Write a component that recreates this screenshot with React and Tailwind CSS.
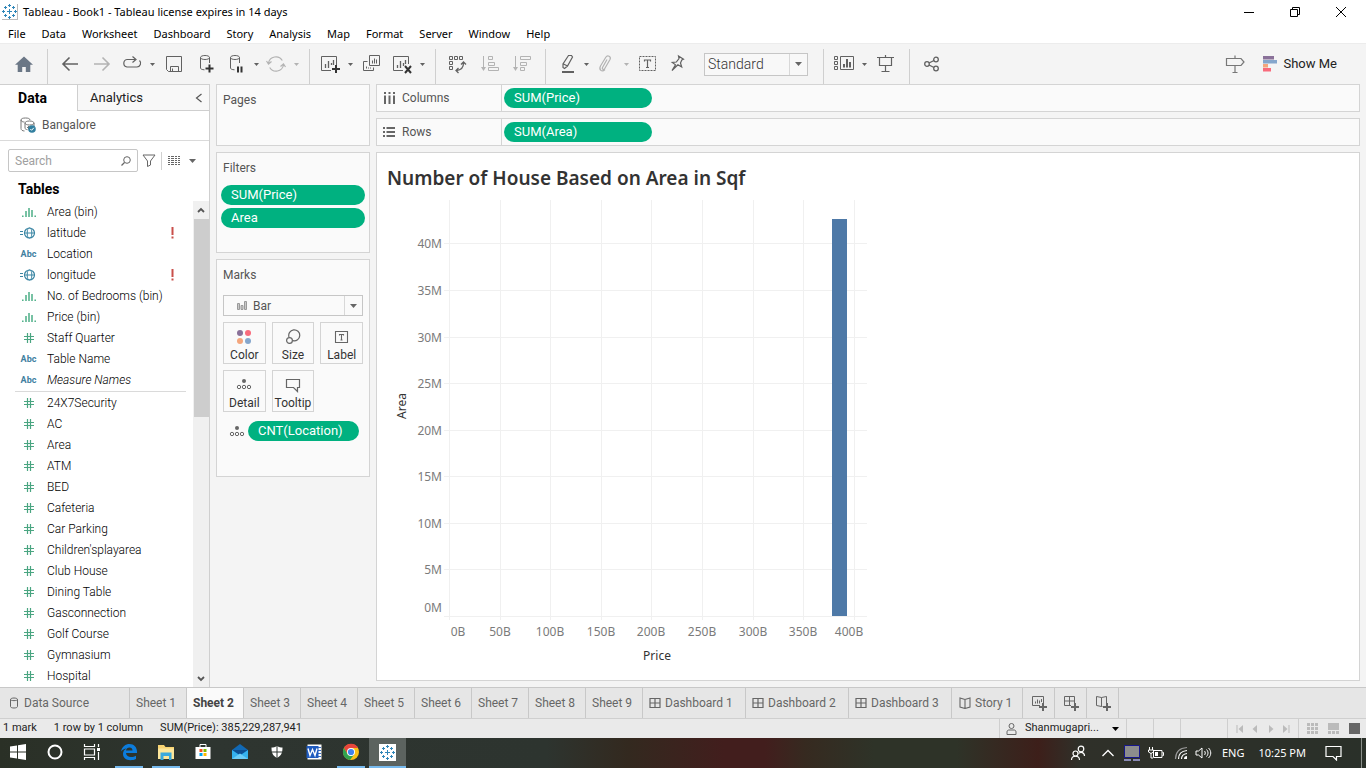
import React from "react";

const UI = "font-[Roboto,'Liberation_Sans',sans-serif]";
const SYS = "font-['Noto_Sans','Open_Sans',sans-serif]";

/* ---------- shared drawing helpers ---------- */

function Svg({ w = 20, h = 20, children, className = "" }) {
  return (
    <svg width={w} height={h} viewBox={`0 0 ${w} ${h}`} fill="none" className={`shrink-0 ${className}`} aria-hidden="true">
      {children}
    </svg>
  );
}

function TableauMark({ size = 16, color = "#2f86b8" }) {
  const plus = (x, y, r, w) => <path key={`${x}-${y}`} d={`M${x - r} ${y}h${2 * r}M${x} ${y - r}v${2 * r}`} strokeWidth={w} />;
  return (
    <svg width={size} height={size} viewBox="0 0 15 15" fill="none" stroke={color} className="shrink-0" aria-hidden="true">
      {plus(7.5, 7.5, 2.5, 1)}
      {plus(7.5, 1.5, 1.5, 1)}
      {plus(7.5, 13.5, 1.5, 1)}
      {plus(1.5, 7.5, 1.5, 1)}
      {plus(13.5, 7.5, 1.5, 1)}
      {plus(3.5, 3.5, 1.5, 1)}
      {plus(11.5, 3.5, 1.5, 1)}
      {plus(3.5, 11.5, 1.5, 1)}
      {plus(11.5, 11.5, 1.5, 1)}
    </svg>
  );
}

function Caret({ color = "#666", w = 7, h = 4 }) {
  return (
    <svg width={w} height={h} viewBox="0 0 8 4" preserveAspectRatio="none" className="shrink-0" aria-hidden="true">
      <path d="M0 0h8L4 4z" fill={color} />
    </svg>
  );
}

/* ---------- title and menu bars ---------- */

function TitleBar() {
  return (
    <header className="flex h-6 shrink-0 items-center bg-white pr-[2px] pl-[2px]">
      <span className="flex size-4 items-center justify-center border-r border-b border-[#bbb]">
        <TableauMark size={15} />
      </span>
      <h1 className="ml-[5px] flex-1 text-[11px] leading-4 whitespace-nowrap">Tableau - Book1 - Tableau license expires in 14 days</h1>
      <button aria-label="Minimize" className="flex h-5 w-[46px] items-center justify-center">
        <Svg w={12} h={12}><path d="M1 6.500h10" stroke="#000" /></Svg>
      </button>
      <button aria-label="Restore" className="flex h-5 w-[46px] items-center justify-center">
        <Svg w={12} h={12}><path d="M1.500 3.500h7v7h-7zM3.500 3.500v-2h7v7h-2" stroke="#000" /></Svg>
      </button>
      <button aria-label="Close" className="flex h-5 w-[46px] items-center justify-center">
        <Svg w={12} h={12}><path d="M1 1l10 10M11 1L1 11" stroke="#000" /></Svg>
      </button>
    </header>
  );
}

const MENUS = ["File", "Data", "Worksheet", "Dashboard", "Story", "Analysis", "Map", "Format", "Server", "Window", "Help"];

function MenuBar() {
  return (
    <nav className="flex h-[19px] shrink-0 items-center gap-4 bg-white pl-2">
      {MENUS.map((m) => (
        <button key={m} className="text-[11px] leading-4">{m}</button>
      ))}
    </nav>
  );
}

/* ---------- toolbar ---------- */

const G = "#616161";
const L = "#b3b3b3";

function Tool({ label, narrow, children }) {
  return (
    <button aria-label={label} className={`flex h-8 shrink-0 items-center justify-center ${narrow ? "w-7" : "w-8"}`}>
      <Svg>{children}</Svg>
    </button>
  );
}

function Drop({ label, color }) {
  return (
    <button aria-label={label} className="flex h-8 w-3 shrink-0 items-center justify-center">
      <Caret color={color} w={5} h={3} />
    </button>
  );
}

function Sep() {
  return <span className="mr-[6px] ml-[7px] h-[35px] w-px shrink-0 self-end bg-[#cfcfcf]" />;
}

function Cylinder() {
  return <path d="M13.500 9V3.500c0-1.200-2-2-4.500-2s-4.500.8-4.500 2 2 2 4.500 2 4.500-.8 4.500-2M4.500 3.500v10.500c0 1 1.500 1.700 4 1.800" stroke={G} />;
}

function Toolbar() {
  return (
    <div role="toolbar" aria-label="Toolbar" className="flex h-[41px] shrink-0 items-center border-t border-[#ececec] bg-[#f4f4f4] pl-2">
      <Tool label="Start page"><path d="M10 2.500l9 8.200h-2.700V18h-4.500v-5H8.200v5H3.700v-7.300H1z" fill="#6b7786" /></Tool>
      <Sep />
      <Tool label="Undo"><path d="M18 10H3M9.500 3.500L3 10l6.500 6.500" stroke={G} strokeWidth="1.600" /></Tool>
      <Tool label="Redo"><path d="M2 10h15M10.500 3.500L17 10l-6.500 6.500" stroke={L} strokeWidth="1.600" /></Tool>
      <Tool label="Replay" narrow>
        <path d="M13 5.500H5a3.800 3.800 0 000 7.500h10a3.800 3.800 0 002.500-6.500M10.500 2.500l3.500 3-3.500 3" stroke={G} strokeWidth="1.200" />
      </Tool>
      <Drop label="Replay options" color={G} />
      <Tool label="Save"><path d="M2.500 2.500h15v15h-13l-2-2zM6.500 17v-4.500h8V17M8.500 14.500v2.500" stroke={G} /></Tool>
      <Tool label="New data source"><Cylinder /><path d="M13.500 10.500v8M9.500 14.500h8" stroke="#333" strokeWidth="2" /></Tool>
      <Tool label="Pause auto updates" narrow><Cylinder /><path d="M12 12.500v6M15.500 12.500v6" stroke="#333" strokeWidth="2" /></Tool>
      <Drop label="Pause options" color={G} />
      <Tool label="Run update" narrow>
        <path d="M2.500 9a7.500 7.500 0 0113.800-2.500M17.500 11a7.500 7.500 0 01-13.800 2.500M.5 7l2 3 3-2.500M19.500 13l-2-3-3 2.500" stroke={L} strokeWidth="1.200" />
      </Tool>
      <Drop label="Update options" color={L} />
      <Sep />
      <Tool label="New worksheet" narrow>
        <path d="M16.500 11V2.500h-15v14H11" stroke={G} />
        <path d="M5.500 14v-4M8.500 14V7M11.500 11V9M13.500 11V6" stroke={G} strokeWidth="1.300" />
        <path d="M16 11v8M12 15h8" stroke="#333" strokeWidth="2" />
      </Tool>
      <Drop label="Worksheet options" color={G} />
      <Tool label="Duplicate">
        <path d="M7.500 1.500h10v10h-10zM5.500 7.500h-4v9h10v-3" stroke={G} />
        <path d="M10.500 9.500v-3M12.500 9.500v-5M14.500 9.500v-4M4.500 14.500v-2M6.500 14.500v-1M8.500 14.500v-1" stroke={G} />
      </Tool>
      <Tool label="Clear sheet" narrow>
        <path d="M16.500 10V2.500h-15v14H11" stroke={G} />
        <path d="M5.500 14v-3M8.500 14V7M11.500 12V9M13.500 10V6" stroke={G} strokeWidth="1.300" />
        <path d="M13 12l6 7M19 12l-6 7" stroke="#333" strokeWidth="2" />
      </Tool>
      <Drop label="Clear options" color={G} />
      <Sep />
      <Tool label="Swap rows and columns">
        <path d="M1.500 2.500h3v3h-3zM6.500 2.500h3v3h-3zM11.500 2.500h3v3h-3zM1.500 7.500h3v3h-3zM1.500 12.500h3v3h-3z" stroke={G} />
        <path d="M15.500 9c0 4-2 7-7 7.500M13 10.500L15.500 8l2.500 2.500M10.500 14L8 16.500l2.500 2.500" stroke={G} strokeWidth="1.300" />
      </Tool>
      <Tool label="Sort ascending">
        <path d="M3.500 2v13" stroke={L} /><path d="M1 13h5l-2.500 4z" fill={L} />
        <path d="M8.500 2.500h4v3h-4zM8.500 8.500h6v3h-6zM8.500 13.500h10v3h-10z" stroke={L} />
      </Tool>
      <Tool label="Sort descending">
        <path d="M3.500 2v13" stroke={L} /><path d="M1 13h5l-2.500 4z" fill={L} />
        <path d="M8.500 2.500h10v3h-10zM8.500 8.500h6v3h-6zM8.500 13.500h4v3h-4z" stroke={L} />
      </Tool>
      <Sep />
      <Tool label="Highlight" narrow>
        <path d="M12.500 1.500h3l1 1.500-5 9-3 2.500-1.500-1V10zM7.500 10l4 2" stroke={G} strokeWidth="1.200" />
        <path d="M6 18h12" stroke={G} strokeWidth="2" />
      </Tool>
      <Drop label="Highlight options" color={G} />
      <Tool label="Group members" narrow>
        <path d="M11 5.500l-4.500 8c-.8 2 1.500 2.500 2.300 1l5.200-9c1.500-3-2.500-5-4.200-2.200L4.500 12c-2 4 1.500 6.500 4.500 3.500" stroke={L} strokeWidth="1.200" />
      </Tool>
      <Drop label="Group options" color={L} />
      <Tool label="Show mark labels">
        <path d="M1.500 2.500h16v14h-16z" stroke={G} strokeDasharray="2 1" />
        <path d="M6.500 7.500V6h6v1.500M9.500 6v7.500M8 13.500h3" stroke={G} strokeWidth="1.200" />
      </Tool>
      <Tool label="Fix axes" narrow>
        <path d="M10.500 2l5 3.200-1.700.8-1.300 3 1.200 4-3.800-2.200L4 16.500l3.500-5.700-3.200-2.300 4-.5L11 4.500z" stroke={G} strokeWidth="1.200" />
      </Tool>
      <div className="relative ml-3 flex h-[23px] w-[104px] shrink-0 items-center border border-[#c6c6c6] bg-[#f8f8f8]">
        <select aria-label="Fit" defaultValue="Standard" className="h-5 w-full appearance-none bg-transparent pl-[3px] text-[14px] leading-4 font-light text-[#333] outline-none">
          <option>Standard</option>
          <option>Fit Width</option>
          <option>Entire View</option>
        </select>
        <span className="pointer-events-none absolute inset-y-0 right-0 flex w-[18px] items-center justify-center border-l border-[#d8d8d8]">
          <Caret />
        </span>
      </div>
      <span className="w-2 shrink-0" />
      <Sep />
      <Tool label="Show cards" narrow>
        <path d="M.5 2.500h3v3h-3zM.5 7.500h3v3h-3zM.5 12.500h3v3h-3zM6.500 2.500h13v13h-13z" stroke={G} />
        <path d="M10 13.500V10M13 13.500V5M16 13.500V8" stroke={G} strokeWidth="2" />
      </Tool>
      <Drop label="Card options" color={G} />
      <Tool label="Presentation mode">
        <path d="M1 3.500h17M3.500 3.500v8h12v-8M9.500 1v2.500M9.500 11.500v6M5.500 17.500h8" stroke={G} strokeWidth="1.200" />
      </Tool>
      <Sep />
      <Tool label="Share">
        <circle cx="5" cy="10" r="2.300" stroke={G} strokeWidth="1.300" />
        <circle cx="14" cy="5.500" r="2.300" stroke={G} strokeWidth="1.300" />
        <circle cx="14" cy="14.500" r="2.300" stroke={G} strokeWidth="1.300" />
        <path d="M7 9L12 6.500M7 11L12 13.500" stroke={G} strokeWidth="1.300" />
      </Tool>
      <span className="flex-1" />
      <Tool label="Guide">
        <path d="M1.500 4.500H16l3 3.500-3 3.500H1.500zM10 1.500v3M10 11.500v7M7.500 18.500h5" stroke="#777" strokeWidth="1.200" />
      </Tool>
      <button className="mr-[29px] ml-3 flex items-center gap-[6px] text-[13px] leading-5 whitespace-nowrap text-[#222]">
        <Svg w={14} h={16}>
          <path d="M0 0h11v3.500H0z" fill="#8a7199" /><path d="M0 4h14v3.500H0z" fill="#85a6cc" />
          <path d="M0 8h5v3.500H0z" fill="#f4a67d" /><path d="M0 12h8v3.500H0z" fill="#f96b7c" />
        </Svg>
        Show Me
      </button>
    </div>
  );
}

/* ---------- data pane ---------- */

function FieldIcon({ kind }) {
  if (kind === "abc") return <span className="text-[9px] leading-4 font-bold text-[#417f9f]">Abc</span>;
  if (kind === "bin")
    return <Svg w={14} h={12}><path d="M.8 11v-1.500M4 11V5M7 11V2M10 11V4M13.200 11v-1.500" stroke="#4caf87" strokeWidth="1.500" /></Svg>;
  if (kind === "geo")
    return (
      <Svg w={18} h={14}>
        <path d="M0 5.500h3M0 8.500h3" stroke="#3b86a4" />
        <circle cx="9.500" cy="7" r="5" stroke="#3b86a4" strokeWidth="1.200" />
        <ellipse cx="9.500" cy="7" rx="2.300" ry="5" stroke="#3b86a4" /><path d="M4.500 7h10" stroke="#3b86a4" />
      </Svg>
    );
  return <Svg w={12} h={12}><path d="M4.500 1v10M7.500 1v10M1 4.500h10M1 7.500h10" stroke="#4aa581" strokeWidth="1.200" /></Svg>;
}

const DIMENSIONS = [
  ["bin", "Area (bin)"], ["geo", "latitude", true], ["abc", "Location"], ["geo", "longitude", true],
  ["bin", "No. of Bedrooms (bin)"], ["bin", "Price (bin)"], ["num", "Staff Quarter"], ["abc", "Table Name"], ["abc", "Measure Names"],
];
const MEASURES = ["24X7Security", "AC", "Area", "ATM", "BED", "Cafeteria", "Car Parking", "Children'splayarea", "Club House",
  "Dining Table", "Gasconnection", "Golf Course", "Gymnasium", "Hospital"];

function Field({ kind, name, warn }) {
  return (
    <li className="flex h-[21px] items-center text-[12px] leading-4 font-light text-black">
      <span className="flex w-[47px] shrink-0 items-center justify-center pl-[10px]"><FieldIcon kind={kind} /></span>
      <span className={`flex-1 whitespace-nowrap ${name === "Measure Names" ? "italic" : ""}`}>{name}</span>
      {warn && <Svg w={3} h={12} className="mr-[19px]"><path d="M.5 0h2v8h-2zM.5 9.500h2v2h-2z" fill="#c94f4a" /></Svg>}
    </li>
  );
}

function DataPane() {
  return (
    <aside className="flex w-[210px] shrink-0 flex-col border-t border-r border-[#cfcfcf] bg-white">
      <div className="flex h-[26px] shrink-0 leading-5">
        <button className="w-[77px] pr-3 text-[14px] font-bold text-black">Data</button>
        <div className="flex flex-1 items-center border-b border-l border-[#cfcfcf] bg-[#f8f8f8] pl-3 text-[13px]">
          <button className="flex-1 text-left text-[#222]">Analytics</button>
          <button aria-label="Collapse pane" className="pr-[6px]">
            <Svg w={8} h={10}><path d="M6.500 1L1.500 5l5 4" stroke="#555" strokeWidth="1.200" /></Svg>
          </button>
        </div>
      </div>
      <div className="flex h-[30px] shrink-0 items-center gap-[6px] border-b border-[#dadada] pb-[2px] pl-5 text-[12px] text-[#555]">
        <Svg w={16} h={16}>
          <path d="M10 3C10 1.500 8 1 5.500 1S1 1.500 1 3v8.500C1 13 2.500 14 4.500 14M1 3c0 1.500 2 2 3.500 2" stroke="#777" />
          <path d="M5 6c0-1.200 2-2 4.500-2S14 4.800 14 6s-2 2-4.500 2S5 7.200 5 6v5c0 1 1 1.500 2.500 1.700M14 6v3M7 10.500h3M8.500 9v3" stroke="#777" />
          <circle cx="12" cy="12" r="3.800" fill="#327f9f" /><path d="M10.300 12l1.300 1.300 2.200-2.500" stroke="#fff" />
        </Svg>
        Bangalore
      </div>
      <div className="mt-2 flex h-[23px] shrink-0 items-center pl-2">
        <div className="flex h-[23px] w-[130px] items-center rounded-[2px] border border-[#c6c6c6] pr-[6px] pl-[6px]">
          <input aria-label="Search fields" placeholder="Search" className="h-4 w-0 flex-1 bg-transparent text-[12px] leading-4 outline-none placeholder:text-[#a0a0a0]" />
          <Svg w={10} h={10}><circle cx="6" cy="4" r="3.300" stroke="#666" /><path d="M3.500 6.500L.5 9.500" stroke="#666" strokeWidth="1.200" /></Svg>
        </div>
        <button aria-label="Filter fields" className="ml-1">
          <Svg w={14} h={13}><path d="M1 1h12L8.500 7v4l-3 1.500V7z" stroke="#666" /></Svg>
        </button>
        <span className="ml-[5px] h-[18px] w-px bg-[#d0d0d0]" />
        <button aria-label="View options" className="ml-[6px] flex items-center gap-[9px]">
          <Svg w={12} h={9}>
            <path d="M0 .5h12M0 2.500h12M0 4.500h12M0 6.500h12M0 8.500h12" stroke="#666" strokeDasharray="2 1 3 1 2 1 2" />
          </Svg>
          <Caret />
        </button>
      </div>
      <h2 className="mt-[7px] shrink-0 pl-[18px] text-[14px] leading-5 font-bold text-black">Tables</h2>
      <div className="mt-[2px] flex min-h-0 flex-1">
        <div className="min-w-0 flex-1 overflow-hidden">
          <ul>{DIMENSIONS.map(([k, n, w]) => <Field key={n} kind={k} name={n} warn={w} />)}</ul>
          <hr className="mt-px mr-[7px] ml-[15px] border-[#dadada]" />
          <ul>{MEASURES.map((n) => <Field key={n} kind="num" name={n} />)}</ul>
        </div>
        <div className="flex w-4 shrink-0 flex-col items-center bg-[#f0f0f0]">
          <span className="flex h-[18px] items-center"><Svg w={8} h={6}><path d="M1 5l3-3 3 3" stroke="#555" strokeWidth="1.800" /></Svg></span>
          <span className="h-[198px] w-[15px] bg-[#cdcdcd]" />
          <span className="mt-auto flex h-[17px] items-center"><Svg w={8} h={6}><path d="M1 1l3 3 3-3" stroke="#555" strokeWidth="1.800" /></Svg></span>
        </div>
      </div>
    </aside>
  );
}

/* ---------- shelves and cards ---------- */

function Pill({ children, className = "" }) {
  return (
    <button className={`h-5 rounded-full bg-[#00b180] pl-[10px] text-left text-[13px] leading-5 text-white ${className}`}>{children}</button>
  );
}

function Card({ title, className = "", children }) {
  return (
    <section className={`border border-[#d4d4d4] bg-[#fafafa] ${className}`}>
      <h3 className="px-[6px] pt-[7px] text-[12px] leading-4 text-[#555]">{title}</h3>
      {children}
    </section>
  );
}

function DetailIcon() {
  return (
    <Svg w={16} h={14}>
      <circle cx="8" cy="4" r="2" fill="#666" />
      <circle cx="3" cy="10" r="1.700" stroke="#666" /><circle cx="8" cy="10" r="1.700" stroke="#666" /><circle cx="13" cy="10" r="1.700" stroke="#666" />
    </Svg>
  );
}

const MARKS = [
  ["Color", <Svg key="c" w={16} h={16}><circle cx="4" cy="4" r="3" fill="#8a7199" /><circle cx="12" cy="4" r="3" fill="#f96b7c" /><circle cx="4" cy="12" r="3" fill="#f4a67d" /><circle cx="12" cy="12" r="3" fill="#85a6cc" /></Svg>],
  ["Size", <Svg key="s" w={16} h={16}><path d="M4 8a5.500 5.500 0 114 3.700" stroke="#666" strokeWidth="1.200" /><circle cx="4.500" cy="11.500" r="2.900" stroke="#666" strokeWidth="1.200" /></Svg>],
  ["Label", <Svg key="l" w={16} h={16}><path d="M1.500 2.500h12v11h-12zM5.500 6.500V5.500h4v1M7.500 5.500v5.500M6.500 11h2" stroke="#666" strokeWidth="1.100" /></Svg>],
  ["Detail", <DetailIcon key="d" />],
  ["Tooltip", <Svg key="t" w={16} h={16}><path d="M1.500 2.500h13v8h-2v4l-4-4h-7z" stroke="#666" strokeWidth="1.200" /></Svg>],
];

function Cards() {
  return (
    <div className="flex w-[154px] shrink-0 flex-col gap-[6px]">
      <Card title="Pages" className="h-[62px]" />
      <Card title="Filters" className="h-[101px]">
        <div className="mt-[9px] flex flex-col gap-[3px] px-1">
          <Pill>SUM(Price)</Pill>
          <Pill>Area</Pill>
        </div>
      </Card>
      <Card title="Marks" className="h-[218px]">
        <div className="relative mx-[6px] mt-3 flex h-[21px] items-center border border-[#c6c6c6]">
          <Svg w={12} h={11} className="ml-3">
            <path d="M1.500 3.500h2v6h-2zM5 5.500h2v4H5zM8.500 1.500h2v8h-2z" fill="#c9c9c9" stroke="#9a9a9a" />
          </Svg>
          <select aria-label="Mark type" className="h-[18px] flex-1 appearance-none bg-transparent pl-[5px] text-[12px] leading-4 text-[#555] outline-none">
            <option>Bar</option>
            <option>Line</option>
          </select>
          <span className="pointer-events-none absolute inset-y-0 right-0 flex w-[18px] items-center justify-center border-l border-[#d8d8d8]"><Caret /></span>
        </div>
        <div className="mx-[6px] mt-[6px] grid grid-cols-3 gap-[6px]">
          {MARKS.map(([name, icon]) => (
            <button key={name} className="flex h-[42px] flex-col items-center justify-between border border-[#d4d4d4] pt-[6px] text-[12px] leading-4 text-[#333]">
              {icon}
              {name}
            </button>
          ))}
        </div>
        <div className="mt-[9px] flex items-center gap-[3px] pl-3">
          <DetailIcon />
          <Pill className="w-[111px]">CNT(Location)</Pill>
        </div>
      </Card>
    </div>
  );
}

function Shelf({ name, icon, pill }) {
  return (
    <div className="flex h-[28px] shrink-0 items-center border border-[#d4d4d4] bg-[#fafafa] text-[12px] text-[#555]">
      <span className="flex h-full w-[125px] items-center gap-[6px] border-r border-[#d4d4d4] pl-[6px]">{icon}{name}</span>
      <Pill className="ml-[2px] w-[148px]">{pill}</Pill>
    </div>
  );
}

/* ---------- chart ---------- */

const X_LINES = [72, 123, 173, 224, 274, 325, 376, 426, 477];
const X_LABELS = [[81, "0B"], [123, "50B"], [173, "100B"], [224, "150B"], [274, "200B"], [325, "250B"], [376, "300B"], [426, "350B"], [472, "400B"]];
const Y_LINES = [48, 95, 142, 188, 235, 281, 328, 374, 421];
const Y_LABELS = [[48, "40M"], [95, "35M"], [142, "30M"], [188, "25M"], [235, "20M"], [281, "15M"], [328, "10M"], [374, "5M"], [412, "0M"]];

function Chart() {
  return (
    <svg width="500" height="475" viewBox="0 0 500 475" role="img" aria-label="Area by Price" className="font-['Noto_Sans',sans-serif] text-[12px]">
      <g stroke="#f0f0f0">
        {X_LINES.map((x) => <path key={x} d={`M${x + 0.5} 5v420`} />)}
        {Y_LINES.map((y) => <path key={y} d={`M67 ${y + 0.5}h423`} />)}
      </g>
      <rect x="455" y="24" width="15" height="397" fill="#4e79a7" />
      <g fill="#7b7b7b">
        {Y_LABELS.map(([y, t]) => <text key={t} x="65" y={y + 5} textAnchor="end">{t}</text>)}
        {X_LABELS.map(([x, t]) => <text key={t} x={x} y="441" textAnchor="middle">{t}</text>)}
      </g>
      <text x="280" y="465" textAnchor="middle" fill="#333">Price</text>
      <text transform="translate(29 211) rotate(-90)" textAnchor="middle" fill="#333">Area</text>
    </svg>
  );
}

function Worksheet() {
  return (
    <main className="flex min-w-0 flex-1 flex-col gap-[6px]">
      <Shelf name="Columns" pill="SUM(Price)" icon={<Svg w={13} h={13}><path d="M2 0v2M6.500 0v2M11 0v2M2 3.500V12M6.500 3.500V12M11 3.500V12" stroke="#666" strokeWidth="2" /></Svg>} />
      <Shelf name="Rows" pill="SUM(Area)" icon={<Svg w={13} h={13}><path d="M0 2h2M0 6h2M0 10h2M3.500 2H12M3.500 6H12M3.500 10H12" stroke="#666" strokeWidth="2" /></Svg>} />
      <section className="min-h-0 flex-1 overflow-hidden border border-[#d4d4d4] bg-white">
        <h2 className="h-[42px] px-[10px] pt-[11px] font-['Noto_Sans',sans-serif] text-[19px] leading-7 font-semibold text-[#333]">Number of House Based on Area in Sqf</h2>
        <Chart />
      </section>
    </main>
  );
}

/* ---------- sheet tabs and status bar ---------- */

const SHEETS = ["Sheet 1", "Sheet 2", "Sheet 3", "Sheet 4", "Sheet 5", "Sheet 6", "Sheet 7", "Sheet 8", "Sheet 9"];
const TAB = "flex shrink-0 items-center border-r border-[#c8c8c8] whitespace-nowrap";

function GridIcon() {
  return <Svg w={12} h={12}><path d="M1 1.500h10v9H1zM6 1.500v9M1 6h10" stroke="#666" strokeWidth="1.200" /></Svg>;
}
function BookIcon() {
  return <Svg w={12} h={12}><path d="M6 2.500L1 1v9l5 1.500L11 10V1zM6 2.500v9" stroke="#666" strokeWidth="1.100" /></Svg>;
}

function SheetTabs() {
  return (
    <nav className="flex h-[31px] shrink-0 border-t border-[#c8c8c8] bg-[#e6e6e6] text-[12px] text-[#666]">
      <button className={`${TAB} w-[130px] gap-[5px] pl-[9px]`}>
        <Svg w={10} h={12}><path d="M1.500 2.500c0-2 7-2 7 0v7c0 2-7 2-7 0zM1.500 2.500c0 1.500 7 1.500 7 0" stroke="#666" /></Svg>
        Data Source
      </button>
      {SHEETS.map((s) => (
        <button key={s} className={`${TAB} w-[57px] pl-[6px] ${s === "Sheet 2" ? "bg-[#fafafa] font-bold text-[#444]" : ""}`}>{s}</button>
      ))}
      <button className={`${TAB} w-[103px] gap-1 pl-[6px]`}><GridIcon />Dashboard 1</button>
      <button className={`${TAB} w-[103px] gap-1 pl-[6px]`}><GridIcon />Dashboard 2</button>
      <button className={`${TAB} w-[103px] gap-1 pl-[6px]`}><GridIcon />Dashboard 3</button>
      <button className={`${TAB} w-[71px] gap-1 pl-[7px]`}><BookIcon />Story 1</button>
      <button aria-label="New worksheet tab" className={`${TAB} w-8 justify-center`}>
        <Svg w={16} h={16}><path d="M12.500 8V1.500h-11v9H9M4.500 8.500v-2M6.500 8.500v-4M8.500 8.500v-3M10.500 7V4" stroke="#666" /><path d="M12 8v8M8 12h8" stroke="#666" strokeWidth="2" /></Svg>
      </button>
      <button aria-label="New dashboard tab" className={`${TAB} w-8 justify-center`}>
        <Svg w={16} h={16}><path d="M11.500 8V1.500h-10v9H8M6.500 1.500v9M1.500 6h10" stroke="#666" /><path d="M12 8v8M8 12h8" stroke="#666" strokeWidth="2" /></Svg>
      </button>
      <button aria-label="New story tab" className={`${TAB} w-8 justify-center`}>
        <Svg w={16} h={16}><path d="M11.500 8V1.500l-5 1-5-1v9l5 1h1M6.500 2.500v9" stroke="#666" /><path d="M12 8v8M8 12h8" stroke="#666" strokeWidth="2" /></Svg>
      </button>
    </nav>
  );
}

function StatusBar() {
  return (
    <footer className="flex h-5 shrink-0 items-center border-t border-[#cfcfcf] bg-[#eaeaea] pl-[3px] text-[11px] text-[#222]">
      <span>1 mark</span>
      <span className="ml-[17px]">1 row by 1 column</span>
      <span className="ml-[17px] flex-1">SUM(Price): 385,229,287,941</span>
      <button className="flex h-full w-[128px] items-center border-r border-l border-[#cfcfcf] pl-[6px]">
        <Svg w={11} h={14}><circle cx="5.500" cy="4" r="2.500" stroke="#666" /><path d="M1 12.500V10c0-1.500 1-2 2-2h5c1 0 2 .5 2 2v2.500z" stroke="#666" /></Svg>
        <span className="flex-1 pl-2 text-left">Shanmugapri...</span>
        <span className="pr-[7px]"><Caret color="#000" /></span>
      </button>
      <span className="h-full w-[27px] border-r border-[#cfcfcf]" />
      <span className="h-full w-[27px] border-r border-[#cfcfcf]" />
      <span className="h-full w-[47px] border-r border-[#cfcfcf]" />
      <div className="flex h-full w-[71px] items-center justify-around border-r border-[#cfcfcf] px-1">
        <button aria-label="First sheet"><Svg w={8} h={8}><path d="M7 0v8L2.500 4z" fill="#bbb" /><path d="M1 0v8" stroke="#bbb" /></Svg></button>
        <button aria-label="Previous sheet"><Svg w={8} h={8}><path d="M6 0v8L1.500 4z" fill="#bbb" /></Svg></button>
        <button aria-label="Next sheet"><Svg w={8} h={8}><path d="M2 0v8l4.500-4z" fill="#bbb" /></Svg></button>
        <button aria-label="Last sheet"><Svg w={8} h={8}><path d="M1 0v8l4.500-4z" fill="#bbb" /><path d="M7 0v8" stroke="#bbb" /></Svg></button>
      </div>
      <div className="flex items-center gap-[10px] pr-[6px] pl-2">
        <button aria-label="Sheet sorter"><Svg w={11} h={11}><path d="M0 1.500h11M0 5.500h11M0 9.500h11" stroke="#bbb" strokeWidth="3" strokeDasharray="3 1" /></Svg></button>
        <button aria-label="Filmstrip"><Svg w={11} h={11}><path d="M0 0h11v7H0z" fill="#bbb" /><path d="M0 9.500h11" stroke="#bbb" strokeWidth="3" strokeDasharray="3 1" /></Svg></button>
        <button aria-label="Tabs"><Svg w={11} h={11}><path d="M0 0h11v11H0z" fill="#666" /></Svg></button>
      </div>
    </footer>
  );
}

/* ---------- desktop taskbar ---------- */

const APPS = [
  ["Start", "", <Svg key="i" w={18} h={18}><path d="M1 3.500l7-1v6H1zM9 2.300L17 1v7.500H9zM1 9.500h7v6l-7-1zM9 9.500h8V17l-8-1.300z" fill="#fff" /></Svg>],
  ["Cortana", "", <Svg key="i" w={18} h={18}><circle cx="9" cy="9" r="6.500" stroke="#fff" strokeWidth="2" /></Svg>],
  ["Task View", "", <Svg key="i" w={18} h={18}><path d="M1.500 1v2.500h10V1M1.500 17v-2.500h10V17M1.500 6h10v6h-10zM15.500 1v3M15.500 9v8" stroke="#fff" strokeWidth="1.200" /><path d="M14 5h3v3h-3z" fill="#fff" /></Svg>],
  ["Edge", "open", <Svg key="i" w={18} h={18}><path d="M1 8.500C2 3.500 5.500 1 9.500 1 14 1 17 4.500 17 8.500V10H6c.2 2.800 2.500 4 5 4 2 0 3.700-.5 5-1.300V16c-1.500.8-3.500 1.200-5.500 1.200C6 17.200 3 14.500 3 11c0-2.700 1.400-4.500 3.500-5.500C4.300 5.700 2.300 6.700 1 8.500zM6 7.500h6.500C12.500 5.700 11.300 4.500 9.500 4.500S6.300 5.700 6 7.500z" fill="#0c7cdc" /></Svg>],
  ["File Explorer", "open", <Svg key="i" w={18} h={18}><path d="M1 2h6l1.500 2H17v12H1z" fill="#f7d372" /><path d="M1 5.500h16V16H1z" fill="#fde69a" /><path d="M3.500 9.500h11V17H12v-4H6.500v4h-3z" fill="#3ba9dc" /></Svg>],
  ["Store", "", <Svg key="i" w={18} h={18}><path d="M6 4V1.500h6V4" stroke="#fff" /><path d="M1.500 4h15v12h-15z" fill="#fff" /><path d="M5.500 6h3v3h-3z" fill="#f25022" /><path d="M9.500 6h3v3h-3z" fill="#7fba00" /><path d="M5.500 10h3v3h-3z" fill="#00a4ef" /><path d="M9.500 10h3v3h-3z" fill="#ffb900" /></Svg>],
  ["Mail", "", <Svg key="i" w={18} h={18}><path d="M1 7l8-6 8 6v9H1z" fill="#1169b5" /><path d="M1 7h16l-8 5z" fill="#0d4f93" /><path d="M1 7l8 5.500L17 7v9H1z" fill="#35b1ee" /><path d="M1 16l8-5.500 8 5.500z" fill="#6bcbf7" /></Svg>],
  ["Security", "", <Svg key="i" w={18} h={18}><path d="M9 3c2 1.300 3.500 1.500 5.500 1.500 0 5-1 8-5.500 10.500-4.500-2.500-5.500-5.500-5.500-10.500C5.500 4.500 7 4.300 9 3z" fill="#fff" /><path d="M9 3v12M3.500 9h11" stroke="#2d3430" /></Svg>],
  ["Word", "", <Svg key="i" w={18} h={18}><path d="M2.500 1.500h14v15h-14z" fill="#fff" /><path d="M12 4.500h4M12 7.500h4M12 10.500h4M12 13.500h4" stroke="#3b6fc4" /><path d="M1.500 3h12v12h-12z" fill="#1f5bbf" /><path d="M3 5.500l2 7 2.500-6 2.500 6 2-7" stroke="#fff" strokeWidth="1.400" /></Svg>],
  ["Chrome", "open", <Svg key="i" w={18} h={18}><circle cx="9" cy="9" r="8" fill="#fbc116" /><path d="M9 5h7a8 8 0 00-14 0l3.500 6z" fill="#e8453c" /><path d="M2 5a8 8 0 006 12l4.500-6L9 13l-3.500-2z" fill="#31a350" /><circle cx="9" cy="9" r="4" fill="#fff" /><circle cx="9" cy="9" r="3.100" fill="#4083ee" /></Svg>],
  ["Tableau", "active", <span key="i" className="flex size-[17px] items-center justify-center bg-white"><TableauMark size={15} /></span>],
];

function Taskbar() {
  return (
    <footer className={`${SYS} flex h-[30px] shrink-0 items-center bg-[linear-gradient(90deg,#2a3026_0%,#2e3530_15%,#2d342f_40%,#33291f_46%,#421e1d_53%,#421e1d_56%,#362a20_59%,#2e3328_64%,#2e3328_70%,#3d1f1a_76%,#2f3029_79%,#2a3029_100%)] text-[11px] text-white`}>
      <div className="flex h-full flex-1 items-center">
        {APPS.map(([name, state, icon]) => (
          <button key={name} aria-label={name} className={`flex h-full flex-col items-center justify-between ${name === "Start" ? "w-9" : "w-[37px]"} ${state === "active" ? "bg-[#5c635f]" : ""}`}>
            <span className="flex h-7 items-center">{icon}</span>
            <span className={`h-[2px] ${state === "active" ? "w-full bg-[#76b9ed]" : state === "open" ? "w-7 bg-[#76b9ed]" : "w-7"}`} />
          </button>
        ))}
      </div>
      <div className="flex h-full items-center">
        <button aria-label="People" className="mr-[15px]"><Svg w={16} h={16}><circle cx="11" cy="4" r="2.800" stroke="#fff" strokeWidth="1.200" /><path d="M8.500 8.500c2-1.800 6-1.200 6 2.500" stroke="#fff" strokeWidth="1.200" /><circle cx="5.500" cy="8.500" r="2.500" stroke="#fff" strokeWidth="1.200" /><path d="M1.500 15c0-5 8-5 8 0" stroke="#fff" strokeWidth="1.200" /></Svg></button>
        <button aria-label="Hidden icons" className="mr-[9px]"><Svg w={14} h={10}><path d="M1.500 8L7 2.500 12.500 8" stroke="#fff" strokeWidth="1.300" /></Svg></button>
        <button aria-label="Touchpad" className="mr-2"><Svg w={16} h={16}><path d="M.5.500h15v12H.5z" fill="#8d8d8d" stroke="#17178c" /><path d="M0 15h7M9 15h7" stroke="#8a8ab5" strokeWidth="2" /></Svg></button>
        <button aria-label="Battery" className="mr-[10px]"><Svg w={16} h={14}><path d="M5.500 4.500h8.500v7H5.500zM14.500 6.500h1v3h-1" stroke="#fff" /><path d="M7 6h3v4H7z" fill="#fff" /><path d="M1.500 1v3M4.500 1v3M.5 4h5v2L3 7.500.5 6zM3 7v5h2" stroke="#fff" /></Svg></button>
        <button aria-label="Network" className="mr-[7px]"><Svg w={14} h={14}><path d="M1.500 13C1.500 6 6 2 13 1.500" stroke="#999" strokeWidth="1.200" /><path d="M4.500 13c0-5 3-8 8.500-8.500M7.500 13c0-3 2-5 5.500-5.500" stroke="#fff" strokeWidth="1.200" /><path d="M10 13c0-2 1-2.800 3-3v3z" fill="#fff" /></Svg></button>
        <button aria-label="Volume" className="mr-[10px]"><Svg w={17} h={14}><path d="M1 5h2.500L7 2v10L3.500 9H1z" stroke="#fff" /><path d="M9.500 5c1 1 1 3 0 4M11.500 3.500c2 2 2 5 0 7M13.500 2c3 3 3 7 0 10" stroke="#fff" /></Svg></button>
        <span className="mr-[14px]">ENG</span>
        <time className="mr-[19px]">10:25 PM</time>
        <button aria-label="Notifications" className="mr-[19px]"><Svg w={17} h={16}><path d="M1 1.500h15v10h-4.500v3.500L8 11.500H1z" stroke="#fff" strokeWidth="1.200" /></Svg></button>
        <span className="mr-1 h-full w-px bg-[#8a8f8a]" />
      </div>
    </footer>
  );
}

export default function App() {
  return (
    <div className={`${UI} flex h-screen flex-col overflow-hidden bg-[#f4f4f4] text-black`}>
      <div className={`${SYS} shrink-0`}>
        <TitleBar />
        <MenuBar />
      </div>
      <Toolbar />
      <div className="flex min-h-0 flex-1">
        <DataPane />
        <div className="flex min-w-0 flex-1 gap-[6px] pr-[6px] pb-[6px] pl-[6px]">
          <Cards />
          <Worksheet />
        </div>
      </div>
      <SheetTabs />
      <StatusBar />
      <Taskbar />
    </div>
  );
}
